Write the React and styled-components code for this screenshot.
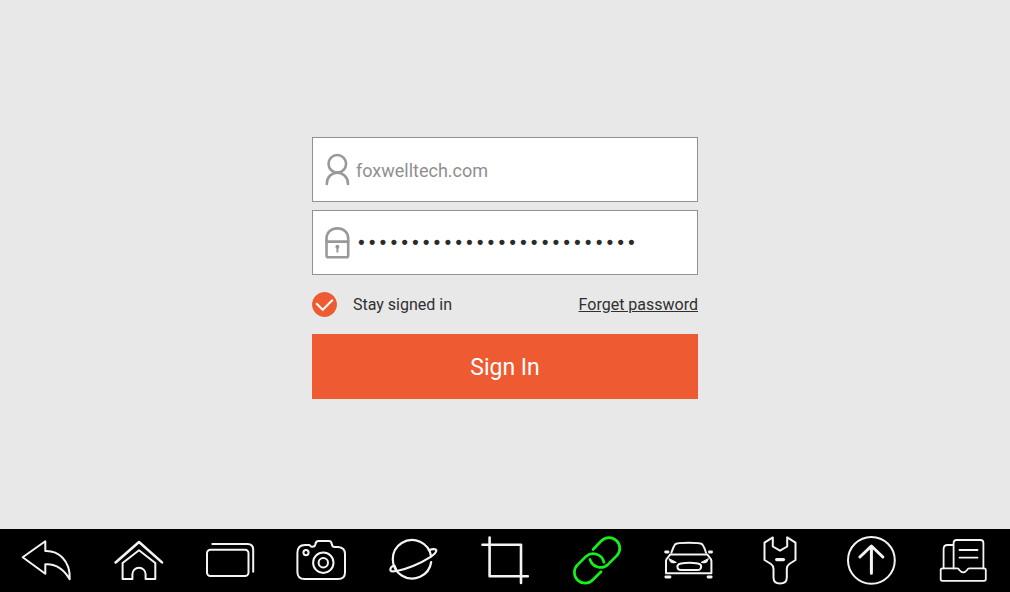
import React, { useState } from 'react'
import styled, { createGlobalStyle } from 'styled-components'

const GlobalStyle = createGlobalStyle`
  *, *::before, *::after {
    box-sizing: border-box;
  }

  body {
    margin: 0;
    background: #e8e8e8;
    color: #303030;
    font-family: Roboto, 'Open Sans', sans-serif;
  }
`

const Page = styled.div`
  display: flex;
  flex-direction: column;
  min-height: 100vh;
`

const Main = styled.main`
  flex: 1;
  display: flex;
  align-items: center;
  justify-content: center;
  padding-top: 7px;
`

const Form = styled.form`
  display: flex;
  flex-direction: column;
  width: 100%;
  max-width: 386px;
`

const Field = styled.label`
  display: flex;
  align-items: center;
  gap: 6px;
  height: 65px;
  padding: 0 11px;
  background: #fff;
  border: 1px solid #929292;

  & + & {
    margin-top: 8px;
  }

  svg {
    flex: none;
    fill: none;
    stroke: #999;
    stroke-width: 2.6;
    stroke-linecap: round;
    stroke-linejoin: round;
  }
`

const Input = styled.input`
  flex: 1;
  min-width: 0;
  padding: 2px 0 0;
  border: 0;
  outline: 0;
  background: none;
  color: #8f8f8f;
  font-family: inherit;
  font-size: 18px;
  line-height: 24px;

  &[type='password'] {
    color: #2b2b2b;
    font-family: 'Liberation Mono', monospace;
    font-weight: bold;
  }
`

const Options = styled.div`
  display: flex;
  align-items: center;
  justify-content: space-between;
  height: 59px;
  font-size: 16px;
  line-height: 20px;
`

const Stay = styled.label`
  display: flex;
  align-items: center;
  gap: 16px;
  cursor: pointer;
`

const Check = styled.span`
  display: grid;

  input,
  svg {
    grid-area: 1 / 1;
  }

  input {
    appearance: none;
    width: 25px;
    height: 25px;
    margin: 0;
    border: 1px solid #ee5a31;
    border-radius: 50%;
    cursor: pointer;
  }

  input:checked {
    background: #ee5a31;
  }

  svg {
    pointer-events: none;
    fill: none;
    stroke: #fff;
    stroke-width: 2;
  }
`

const Forget = styled.a`
  color: inherit;
  text-decoration: underline;
`

const Submit = styled.button`
  height: 65px;
  padding: 2px 0 0;
  border: 0;
  background: #ee5a31;
  color: #fff;
  font-family: inherit;
  font-size: 23px;
  line-height: 28px;
  cursor: pointer;
`

const Toolbar = styled.nav`
  display: flex;
  padding: 5px 0 6px;
  background: #000;
`

const Tool = styled.button`
  flex: 1;
  display: flex;
  justify-content: center;
  min-width: 0;
  padding: 0;
  border: 0;
  background: none;
  color: ${props => props.$active ? '#14f01c' : '#f4f4f4'};
  cursor: pointer;

  svg {
    fill: none;
    stroke: currentColor;
    stroke-width: ${props => props.$weight || 2};
    stroke-linecap: round;
    stroke-linejoin: round;
  }
`

const tools = [
  {
    name: 'Back',
    icon: <path d="M2.7 23.3L25.3 7.3V17C38 16.5 50.5 26 49.7 45.3C44 35.5 36.5 29.5 25.3 30.3V39.7Z" />
  },
  {
    name: 'Home',
    icon: <>
      <path strokeWidth="2.6" d="M3.6 28.4L27 8L50 28.4" />
      <path d="M10.6 29L27 16.3L43.3 29V45H33.6V40.3A6.6 6.6 0 0 0 20.4 40.3V45H10.6Z" />
    </>
  },
  {
    name: 'Recent apps',
    icon: <>
      <rect x="3" y="15.7" width="41.5" height="26.3" rx="3.5" />
      <path d="M8.3 10H43.5Q49.2 10 49.2 15.7V37.7" />
    </>
  },
  {
    name: 'Camera',
    icon: <>
      <path d="M2.4 19Q2.4 11 10 11H14.5Q16 13.5 18 12.6Q19.8 12.6 20.3 10.5Q20.8 7 23.5 7H34Q36.3 7 36.8 10Q37.3 13 39.5 13H43Q50 13.5 50 20V38.5Q50 45 43 45H9.5Q2.4 45 2.4 38Z" />
      <circle cx="28.3" cy="28.7" r="10.2" />
      <circle cx="28.3" cy="28.7" r="4.7" />
      <circle cx="11" cy="18.6" r="2.6" />
    </>
  },
  {
    name: 'Browser',
    weight: 2.2,
    icon: <>
      <path d="M44.2 28A19.3 19.3 0 1 1 44.2 22.5" />
      <path d="M41.8 16.2C45.5 14.7 48.8 14.6 49.3 16.2C50 19.8 38 27.2 26 32C16.5 35.8 5 38.7 3.6 36.6C2.8 34.4 4.5 32 7.5 31.7L9.5 36.5" />
    </>
  },
  {
    name: 'Screenshot',
    weight: 2.6,
    icon: <path d="M10.6 3.5V42.3H48.8M3.5 10.7H42V49" />
  },
  {
    name: 'Connection',
    active: true,
    weight: 2.7,
    icon: <>
      <path d="M22 15.5L30.4 6.7A10.7 10.7 0 0 1 45.6 21.9L37 30.4A11 11 0 0 1 19 25.5" />
      <path d="M30 37.7L21.7 46A10.7 10.7 0 0 1 6.5 30.9L15 22.4A11 11 0 0 1 32.9 28.3" />
    </>
  },
  {
    name: 'Vehicle',
    icon: <>
      <path d="M8.4 18.7C9.6 15.5 10.5 12.5 12 10.5C14 8.3 37.4 8.3 39.4 10.5C41 12.5 42 15.5 43 18.7" />
      <path d="M7 20.4H44.5C45 22.5 48.4 24 48.4 27V39.3H3V27C3 24 6.5 22.5 7 20.4Z" />
      <path strokeWidth="2.8" d="M2.6 18H5M46.4 18H48.6" />
      <path strokeWidth="2.8" d="M2.8 43H7M45 43H48.2" />
      <path fill="currentColor" strokeWidth="1" d="M6.3 24.8L13.3 28.4Q10 29.6 7.8 28.2ZM45.1 24.8L38.1 28.4Q41.4 29.6 43.6 28.2Z" />
      <path d="M18 29.4Q26.4 28 34.8 29.4Q38.4 30 38.2 32.5Q38 36 34.5 36H18Q14.4 36 14.4 32.5Q14.4 30 18 29.4Z" />
    </>
  },
  {
    name: 'Service',
    icon: <>
      <path d="M18.8 3.4L10.5 8.7V26L17 30Q19.5 31.8 19.5 35V43.5Q19.5 49.5 26 49.5Q32.8 49.5 32.8 43.5V35Q32.8 31.8 35.3 30L41.5 26V8.7L33.2 3.4V12.5L26 16.7L18.8 12.5Z" />
      <path strokeWidth="3.4" d="M22.7 25.6H29.4" />
    </>
  },
  {
    name: 'Update',
    icon: <>
      <circle cx="25.4" cy="26.3" r="23.4" />
      <path strokeWidth="3" d="M25.4 39.3V12M13.9 23L25.4 12L36.9 23" />
    </>
  },
  {
    name: 'Data',
    weight: 1.8,
    icon: <>
      <path d="M15.6 34.4V9Q15.6 6 18.6 6H42.5Q45.4 6 45.4 9V34.4M15.6 11H9.5Q5.6 11 5.6 15V34.4" />
      <path d="M21.5 16H39.5M21.5 23.7H39.5" />
      <path d="M4.5 34.4H19Q20.8 34.4 21.3 36Q25.2 40.8 29.1 36Q29.8 34.4 31.3 34.4H46Q47.8 34.4 47.8 36.2V45Q47.8 46.8 46 46.8H4.5Q2.7 46.8 2.7 45V36.2Q2.7 34.4 4.5 34.4Z" />
    </>
  }
]

const UserIcon = () =>
  <svg width="26" height="33" viewBox="0 0 26 33" aria-hidden="true">
    <circle cx="13.3" cy="10.8" r="8.8" />
    <path d="M2.8 31C2.8 24 7.5 19.8 13.3 19.8S24 24 24 31" />
  </svg>

const LockIcon = () =>
  <svg width="26" height="33" viewBox="0 0 26 33" aria-hidden="true">
    <path d="M2.5 15.6V12.5C2.5 6 7.5 2.4 13.4 2.4S24.2 6 24.2 12.5V15.6" />
    <path d="M2.5 15.6H24.2V29.5Q24.2 31.3 22.4 31.3H4.3Q2.5 31.3 2.5 29.5Z" />
    <circle cx="13.4" cy="20.8" r="1" strokeWidth="2" />
    <path strokeWidth="2" strokeLinecap="butt" d="M13.4 21V26.5" />
  </svg>

const App = () => {
  const [user, setUser] = useState('foxwelltech.com')
  const [password, setPassword] = useState('foxwelltech-diagnostic-tab')
  const [stay, setStay] = useState(true)

  return (
    <Page>
      <GlobalStyle />
      <Main>
        <Form onSubmit={e => e.preventDefault()}>
          <Field>
            <UserIcon />
            <Input
              type="text"
              aria-label="Account"
              value={user}
              onChange={e => setUser(e.target.value)}
            />
          </Field>
          <Field>
            <LockIcon />
            <Input
              type="password"
              aria-label="Password"
              value={password}
              onChange={e => setPassword(e.target.value)}
            />
          </Field>
          <Options>
            <Stay>
              <Check>
                <input type="checkbox" checked={stay} onChange={e => setStay(e.target.checked)} />
                <svg width="25" height="25" viewBox="0 0 25 25" aria-hidden="true">
                  <path d="M4.2 11.3L10.7 17.8L20.8 7.7" />
                </svg>
              </Check>
              Stay signed in
            </Stay>
            <Forget href="#forget">Forget password</Forget>
          </Options>
          <Submit type="submit">Sign In</Submit>
        </Form>
      </Main>
      <Toolbar>
        {tools.map(({ name, icon, active, weight }) =>
          <Tool key={name} type="button" aria-label={name} $active={active} $weight={weight}>
            <svg width="52" height="52" viewBox="0 0 52 52" aria-hidden="true">{icon}</svg>
          </Tool>
        )}
      </Toolbar>
    </Page>
  )
}

export default App
